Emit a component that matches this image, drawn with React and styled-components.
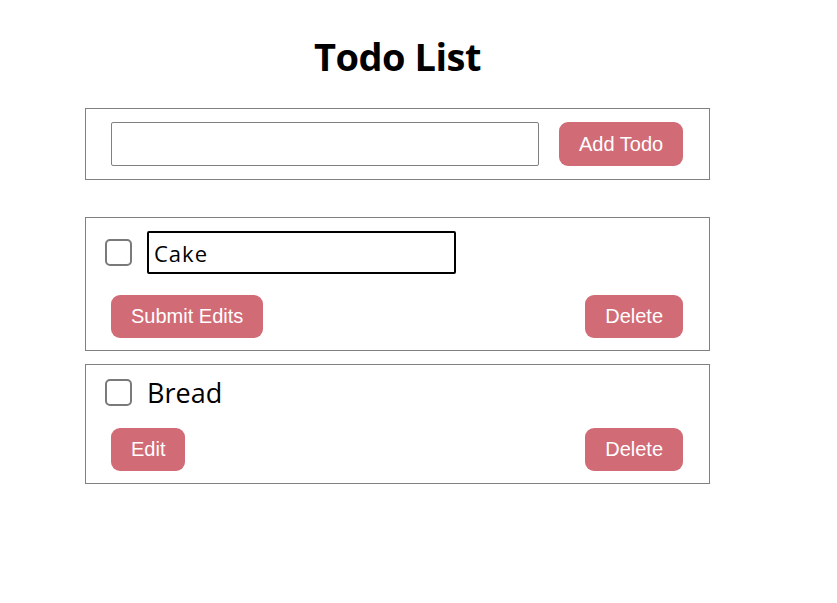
import React, { useState } from "react";
import styled, { createGlobalStyle } from "styled-components";

const Global = createGlobalStyle`
  html, body { margin: 0; padding: 0; background: #fff; }
  body { font-family: "Open Sans", "Noto Sans", sans-serif; color: #000; }
`;

const Page = styled.div`
  width: 625px;
  margin-left: 85px;
  padding-top: 28px;
`;

const Title = styled.h1`
  margin: 0 0 24px;
  text-align: center;
  font-family: "Open Sans", sans-serif;
  font-weight: 700;
  font-size: 38px;
  line-height: 56px;
  letter-spacing: -0.5px;
`;

const Panel = styled.div`
  border: 1px solid #808080;
  box-sizing: border-box;
`;

const AddPanel = styled(Panel)`
  display: flex;
  align-items: center;
  gap: 20px;
  padding: 13px 26px 13px 25px;
  margin-bottom: 37px;
`;

const TextBox = styled.input`
  box-sizing: border-box;
  height: ${(p) => p.$h}px;
  width: ${(p) => p.$w}px;
  flex: none;
  border: ${(p) => (p.$focused ? "2px solid #000" : "1px solid #808080")};
  border-radius: 2px;
  padding: 0 5px;
  font-family: "Open Sans", sans-serif;
  font-size: 22px;
  letter-spacing: 1px;
  color: #000;
  outline: none;
  background: #fff;
`;

const Button = styled.button`
  box-sizing: border-box;
  flex: none;
  white-space: nowrap;
  height: ${(p) => p.$h || 43}px;
  padding: 0 20px;
  border: none;
  border-radius: 9px;
  background: #d16b76;
  color: #fff;
  font-family: "Liberation Sans", Arial, sans-serif;
  font-size: 20px;
  cursor: pointer;
`;

const List = styled.div`
  display: flex;
  flex-direction: column;
  gap: 13px;
`;

const Item = styled(Panel)`
  display: flex;
  flex-direction: column;
  gap: 21px;
  padding: 13px 26px 12px 19px;
`;

const Row = styled.div`
  display: flex;
  align-items: center;
  gap: 15px;
  min-height: ${(p) => p.$minH}px;
`;

const Check = styled.input.attrs({ type: "checkbox" })`
  appearance: none;
  box-sizing: border-box;
  width: 27px;
  height: 27px;
  margin: 0;
  border: 2px solid #7a7a7a;
  border-radius: 5px;
  background: #fff;
  flex: none;
`;

const Label = styled.span`
  font-family: "Open Sans", sans-serif;
  font-size: 27px;
  line-height: 29px;
`;

const Actions = styled.div`
  display: flex;
  justify-content: space-between;
  margin-left: 6px;
`;

export default function App() {
  const [text, setText] = useState("");
  const [edit, setEdit] = useState("Cake");
  return (
    <>
      <Global />
      <Page>
        <Title>Todo List</Title>
        <AddPanel>
          <TextBox $w={428} $h={44} value={text} onChange={(e) => setText(e.target.value)} />
          <Button $h={44}>Add Todo</Button>
        </AddPanel>
        <List>
          <Item>
            <Row $minH={43}>
              <Check />
              <TextBox $focused $w={309} $h={43} value={edit} onChange={(e) => setEdit(e.target.value)} />
            </Row>
            <Actions>
              <Button>Submit Edits</Button>
              <Button>Delete</Button>
            </Actions>
          </Item>
          <Item>
            <Row $minH={29}>
              <Check />
              <Label>Bread</Label>
            </Row>
            <Actions>
              <Button>Edit</Button>
              <Button>Delete</Button>
            </Actions>
          </Item>
        </List>
      </Page>
    </>
  );
}
